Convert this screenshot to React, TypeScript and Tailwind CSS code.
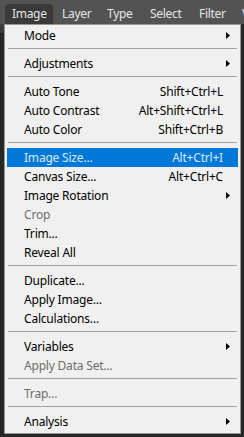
import React from "react";

type Item =
  | { type: "sep" }
  | { type: "item"; label: string; shortcut?: string; arrow?: boolean; disabled?: boolean; active?: boolean };

const items: Item[] = [
  { type: "item", label: "Mode", arrow: true },
  { type: "sep" },
  { type: "item", label: "Adjustments", arrow: true },
  { type: "sep" },
  { type: "item", label: "Auto Tone", shortcut: "Shift+Ctrl+L" },
  { type: "item", label: "Auto Contrast", shortcut: "Alt+Shift+Ctrl+L" },
  { type: "item", label: "Auto Color", shortcut: "Shift+Ctrl+B" },
  { type: "sep" },
  { type: "item", label: "Image Size...", shortcut: "Alt+Ctrl+I", active: true },
  { type: "item", label: "Canvas Size...", shortcut: "Alt+Ctrl+C" },
  { type: "item", label: "Image Rotation", arrow: true },
  { type: "item", label: "Crop", disabled: true },
  { type: "item", label: "Trim..." },
  { type: "item", label: "Reveal All" },
  { type: "sep" },
  { type: "item", label: "Duplicate..." },
  { type: "item", label: "Apply Image..." },
  { type: "item", label: "Calculations..." },
  { type: "sep" },
  { type: "item", label: "Variables", arrow: true },
  { type: "item", label: "Apply Data Set...", disabled: true },
  { type: "sep" },
  { type: "item", label: "Trap...", disabled: true },
  { type: "sep" },
  { type: "item", label: "Analysis", arrow: true },
];

function Arrow() {
  return (
    <svg width="4" height="7" viewBox="0 0 4 7" className="absolute right-[8px] top-[6px]">
      <path d="M0 0 L4 3.5 L0 7 Z" fill="#000" />
    </svg>
  );
}

export default function App() {
  const font = { fontFamily: '"Segoe UI", "Noto Sans", "Open Sans", sans-serif' };
  return (
    <div className="relative w-[244px] h-[437px] bg-[#262626] overflow-hidden" style={font}>
      <div className="h-[24px] bg-[#535353] flex items-end text-[12px] tracking-[-0.3px] text-[#e6e6e6] whitespace-nowrap">
        <div className="ml-[5px] w-[48px] shrink-0 h-[20px] pl-[7px] bg-[#3a3a3a] rounded-t-[4px] flex items-center">Image</div>
        <div className="w-[45px] shrink-0 h-[20px] pl-[9px] flex items-center">Layer</div>
        <div className="w-[43px] shrink-0 h-[20px] pl-[9px] flex items-center">Type</div>
        <div className="w-[49px] shrink-0 h-[20px] pl-[9px] flex items-center">Select</div>
        <div className="w-[43px] shrink-0 h-[20px] pl-[9px] flex items-center">Filter</div>
        <div className="shrink-0 h-[20px] pl-[9px] flex items-center">V</div>
      </div>
      <div className="absolute left-0 top-[24px] w-[4px] h-[9px] bg-[#3c3c3c]" />
      <div className="absolute left-[4px] top-[24px] w-[237px] h-[410px] bg-[#f0f0f0] border border-[#979797] pt-[1px] px-[2px] text-[12px] tracking-[-0.2px]">
        {items.map((it, i) =>
          it.type === "sep" ? (
            <div key={i} className="h-[9px] pt-[3px] pl-[1px] pr-[1px]">
              <div className="h-[1px] bg-[#a0a0a0]" />
            </div>
          ) : (
            <div
              key={i}
              className={
                "relative h-[19px] flex items-center pl-[17px] pr-[15px] leading-none pt-[1px] " +
                (it.active ? "bg-[#0078d7] text-[#dde8f5]" : it.disabled ? "text-[#6d6d6d]" : "text-black")
              }
            >
              <span className="flex-1 whitespace-nowrap">{it.label}</span>
              {it.shortcut && <span className="whitespace-nowrap">{it.shortcut}</span>}
              {it.arrow && <Arrow />}
            </div>
          )
        )}
      </div>
    </div>
  );
}
